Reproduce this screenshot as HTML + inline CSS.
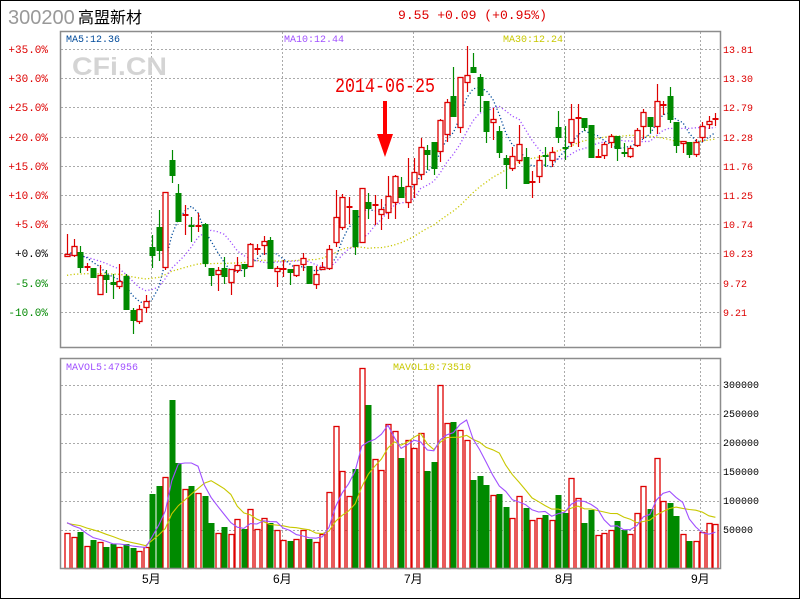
<!DOCTYPE html>
<html><head><meta charset="utf-8"><style>
html,body{margin:0;padding:0;background:#fff;}
#w{position:relative;width:800px;height:600px;overflow:hidden;}
svg{position:absolute;left:0;top:0;}
</style></head><body><div id="w">
<svg id="s" width="800" height="600" xmlns="http://www.w3.org/2000/svg" font-family="Liberation Mono, monospace">
<rect x="0.5" y="0.5" width="799" height="598" fill="#fff" stroke="#000" stroke-width="1"/>
<line x1="0" y1="598.5" x2="800" y2="598.5" stroke="#000"/>
<text x="8" y="24" font-family="Liberation Sans, sans-serif" font-size="20" fill="#999">300200</text>
<text x="78" y="23" font-family="Liberation Sans, 'Noto Sans CJK SC', sans-serif" font-size="16" fill="#000">高盟新材</text>
<text x="398" y="19" font-size="13" fill="#dd0000" textLength="149" lengthAdjust="spacingAndGlyphs">9.55 +0.09 (+0.95%)</text>
<g id="grid" stroke="#aaa" stroke-dasharray="2,2" stroke-width="1"></g>
<text x="72" y="75" font-family="Liberation Sans, sans-serif" font-weight="bold" font-size="25" fill="#d4d4d4" textLength="95" lengthAdjust="spacingAndGlyphs">CFi.CN</text>
<g id="lab" font-size="11" text-anchor="end"></g>
<text x="66" y="42" font-size="10" fill="#004a9a">MA5:12.36</text>
<text x="284" y="42" font-size="10" fill="#a050ff">MA10:12.44</text>
<text x="503" y="42" font-size="10" fill="#c8c800">MA30:12.24</text>
<text x="66" y="370" font-size="10" fill="#a050ff">MAVOL5:47956</text>
<text x="393" y="370" font-size="10" fill="#c8c800">MAVOL10:73510</text>
<g font-size="10" fill="#000">
<text x="723" y="388">300000</text><text x="723" y="417">250000</text><text x="723" y="446">200000</text>
<text x="723" y="475">150000</text><text x="723" y="504">100000</text><text x="723" y="533">50000</text>
</g>
<g font-size="10" fill="#dd0000">
<text x="723" y="53">13.81</text><text x="723" y="82">13.30</text><text x="723" y="111">12.79</text>
<text x="723" y="141">12.28</text><text x="723" y="170">11.76</text><text x="723" y="199">11.25</text>
<text x="723" y="228">10.74</text><text x="723" y="257">10.23</text><text x="723" y="287">9.72</text>
<text x="723" y="316">9.21</text>
</g>
<g font-family="Liberation Sans, 'Noto Sans CJK SC', sans-serif" font-size="12" fill="#000">
<text x="142" y="583">5月</text><text x="273" y="583">6月</text><text x="404" y="583">7月</text>
<text x="555" y="583">8月</text><text x="691" y="583">9月</text>
</g>
<g id="chart"></g>
<rect x="60.5" y="31.5" width="660" height="316" fill="none" stroke="#8c8c8c" stroke-width="1.5"/>
<rect x="60.5" y="358.5" width="660" height="210" fill="none" stroke="#8c8c8c" stroke-width="1.5"/>
<text x="335" y="92" font-size="20" fill="#ee0000" textLength="100" lengthAdjust="spacingAndGlyphs">2014-06-25</text>
<rect x="383" y="101" width="4" height="38" fill="#ff0000"/>
<polygon points="377,134 393,134 385,157" fill="#ff0000"/>
</svg>
</div>
<script>
var NS="http://www.w3.org/2000/svg";
function el(p,t,a){var e=document.createElementNS(NS,t);for(var k in a)e.setAttribute(k,a[k]);p.appendChild(e);return e;}
var g=document.getElementById('grid');
[49,78,107,137,166,195,224,253,283,312].forEach(function(y){el(g,'line',{x1:61,x2:720,y1:y+.5,y2:y+.5});});
[385,414,443,472,501,530].forEach(function(y){el(g,'line',{x1:61,x2:720,y1:y+.5,y2:y+.5});});
[151,282,413,564,700].forEach(function(x){el(g,'line',{x1:x+.5,x2:x+.5,y1:32,y2:347});el(g,'line',{x1:x+.5,x2:x+.5,y1:359,y2:568});});
var lab=document.getElementById('lab');
var L=[["+35.0%",49,"#d00"],["+30.0%",78,"#d00"],["+25.0%",107,"#d00"],["+20.0%",137,"#d00"],["+15.0%",166,"#d00"],["+10.0%",195,"#d00"],["+5.0%",224,"#d00"],["+0.0%",253,"#000"],["-5.0%",283,"#080"],["-10.0%",312,"#080"]];
L.forEach(function(a){var t=el(lab,'text',{x:48,y:a[1]+4,fill:a[2]});t.textContent=a[0];});
var D="254,257,234,257,r;246,256,239,257,r;252,268,246,273,g;266,267,263,271,r;268,278,268,278,g;275,295,265,295,r;275,280,270,293,g;282,285,274,299,g;281,287,264,289,r;276,310,274,310,g;310,321,308,334,g;309,322,305,324,r;301,308,295,313,r;247,256,235,268,g;227,251,210,261,g;192,268,192,270,r;160,176,150,183,g;193,222,184,222,g;214,215,205,235,r;225,227,217,242,g;225,227,213,232,r;224,264,223,267,g;268,276,268,286,g;270,275,267,291,r;268,277,257,284,g;269,283,269,295,r;265,271,257,273,r;264,269,264,277,g;244,267,243,267,r;248,249,244,255,r;241,246,236,255,r;240,269,237,269,g;268,272,266,287,r;268,269,260,277,r;269,273,269,285,g;265,276,265,277,r;258,265,253,271,r;266,284,266,284,g;274,285,266,289,r;267,270,262,270,r;249,269,245,270,r;217,243,190,247,r;197,228,194,230,r;206,207,197,224,r;210,247,210,255,g;188,243,188,243,r;202,209,193,219,g;204,205,195,225,r;209,215,199,230,r;196,213,176,219,r;176,203,175,219,r;187,198,177,198,g;186,203,158,208,r;172,185,158,198,r;147,175,138,180,r;150,155,145,170,g;142,169,142,175,g;120,152,119,162,r;102,135,99,142,r;96,117,67,117,g;77,128,77,133,r;75,83,46,92,r;67,73,53,73,g;77,96,74,112,g;101,132,101,143,g;119,123,108,140,r;131,153,126,158,g;158,165,155,189,g;156,169,147,171,r;144,161,125,164,r;157,184,148,184,g;181,183,171,198,r;160,177,155,183,r;155,157,147,167,g;152,161,147,167,r;127,138,111,143,g;147,149,126,160,g;119,143,104,147,r;117,119,104,147,r;118,128,118,131,g;125,158,125,158,g;156,158,149,158,r;144,156,142,159,r;136,143,134,148,r;136,149,136,161,g;152,154,143,157,g;148,157,146,158,r;130,146,128,147,r;112,127,109,139,r;117,127,117,133,g;101,127,84,134,r;104,106,101,115,r;96,120,87,123,g;122,146,122,153,g;141,144,141,153,r;142,155,142,158,g;142,155,139,157,r;126,138,122,142,r;121,125,116,129,r;118,120,113,126,r".split(";").map(function(s){var a=s.split(",");return [+a[0],+a[1],+a[2],+a[3],a[4]];});
var V=[533,537,532,546,540,542,547,544,547,544,548,551,547,494,486,477,400,463,489,486,493,496,523,533,527,534,519,529,509,529,518,523,530,540,541,539,530,539,542,534,492,426,471,496,469,368,405,459,470,424,431,458,440,448,433,471,462,385,423,422,430,440,480,476,485,495,494,507,518,496,508,520,518,515,520,495,513,478,498,523,510,535,533,530,521,530,534,513,486,509,458,501,503,516,534,541,541,532,523,524];
var C=document.getElementById('chart');
var RED="#dd0000",GRN="#008a00";
function X(i){return 67+6.55*i;}
function ma(arr,n,pad){var out=[];var a=[];for(var k=0;k<n;k++)a.push(pad);a=a.concat(arr);for(var i=0;i<arr.length;i++){var s=0;for(var j=0;j<n;j++)s+=a[i+n-j];out.push(s/n);}return out;}
function line(pts,col,dash,w){var d=pts.map(function(y,i){return (i?'L':'M')+X(i).toFixed(1)+','+y.toFixed(1);}).join('');var o={d:d,fill:'none',stroke:col,'stroke-width':w};if(dash)o['stroke-dasharray']=dash;el(C,'path',o);}
var close=D.map(function(c){return c[4]=='r'?c[0]:c[1];});
// volume bars
V.forEach(function(y,i){var x=Math.round(X(i))-2.5;var r=D[i][4]=='r';
 if(r)el(C,'rect',{x:x+.5,y:y+.5,width:5,height:568-y,fill:'#fff',stroke:RED,'stroke-width':1.3});
 else el(C,'rect',{x:x,y:y,width:6,height:569-y,fill:GRN});});
line(ma(V,10,522),"#c8c800",null,1.1);
line(ma(V,5,520),"#a050ff",null,1.1);
// MAs
line(ma(close,30,276),"#c8c800","1.2,2.2",1.3);
line(ma(close,10,256),"#a050ff","1.2,2.2",1.3);
line(ma(close,5,254),"#004a9a","1.2,2.2",1.3);
// candles
D.forEach(function(c,i){var x=Math.round(X(i));var r=c[4]=='r';var col=r?RED:GRN;
 el(C,'line',{x1:x+.5,x2:x+.5,y1:c[2],y2:c[3],stroke:col,'stroke-width':1.2});
 var h=c[1]-c[0];
 if(h<=2){el(C,'rect',{x:x-2.5,y:c[0],width:6,height:2,fill:col});}
 else if(r)el(C,'rect',{x:x-2,y:c[0]+.5,width:5,height:h-1,fill:'#fff',stroke:col,'stroke-width':1.3});
 else el(C,'rect',{x:x-2.5,y:c[0],width:6,height:h,fill:col});});
</script>
</body></html>
